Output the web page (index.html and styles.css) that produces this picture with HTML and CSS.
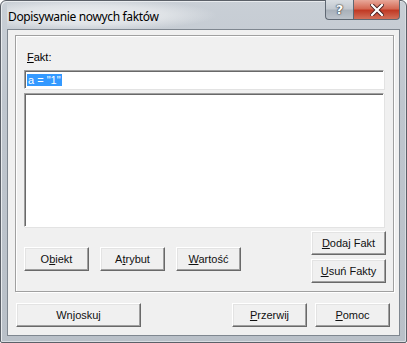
FILE: index.html
```html
<!DOCTYPE html>
<html lang="pl">
<head>
    <meta charset="UTF-8">
    <title>Dopisywanie nowych faktów</title>
    <link rel="stylesheet" href="styles.css">
</head>
<body>
    <div class="window">
        <!-- Pasek tytułu -->
        <div class="titlebar">
            <span class="title">Dopisywanie nowych faktów</span>
            <div class="caption-buttons">
                <div class="cap-btn help">?</div>
                <div class="cap-btn close">
                    <svg width="14" height="12" viewBox="0 0 14 12">
                        <path d="M2 1 L12 11 M12 1 L2 11" stroke="#4a2020" stroke-width="4" stroke-linecap="square"/>
                        <path d="M2 1 L12 11 M12 1 L2 11" stroke="#ffffff" stroke-width="2.2" stroke-linecap="square"/>
                    </svg>
                </div>
            </div>
        </div>

        <div class="client">
            <div class="panel">
                <label class="label"><u>F</u>akt:</label>
                <div class="fact-input"><span class="selected">a = "1"</span></div>
                <div class="fact-list"></div>

                <div class="panel-row">
                    <div class="btn-group">
                        <button class="btn btn-small">O<u>b</u>iekt</button>
                        <button class="btn btn-small">A<u>t</u>rybut</button>
                        <button class="btn btn-small"><u>W</u>artość</button>
                    </div>
                    <div class="btn-column">
                        <button class="btn btn-side"><u>D</u>odaj Fakt</button>
                        <button class="btn btn-side"><u>U</u>suń Fakty</button>
                    </div>
                </div>
            </div>

            <div class="bottom-row">
                <button class="btn btn-wide">Wnjoskuj</button>
                <div class="btn-pair">
                    <button class="btn btn-side"><u>P</u>rzerwij</button>
                    <button class="btn btn-side"><u>P</u>omoc</button>
                </div>
            </div>
        </div>
    </div>
</body>
</html>
```

FILE: styles.css
```css
body {
    margin: 0;
    background: #ffffff;
    font-family: "Liberation Sans", Arial, sans-serif;
}

/* ramka okna */
.window {
    position: relative;
    width: 407px;
    height: 343px;
    box-sizing: border-box;
    border: 1px solid #5b6068;
    border-radius: 6px 6px 2px 2px;
    padding: 0 6px 6px 6px;
    display: flex;
    flex-direction: column;
    background: linear-gradient(to bottom, #c9cfd6 0%, #bfc6ce 30%, #b9c0c8 100%);
    box-shadow: inset 1px 1px 0 #e8ebee, inset -1px -1px 0 #d9dde2;
}

.titlebar {
    height: 28px;
    display: flex;
    align-items: center;
    background: radial-gradient(ellipse 130px 16px at 80px 14px, #eef0f2 0%, rgba(238,240,242,0.6) 60%, rgba(238,240,242,0) 100%);
}

.title {
    font-family: "Noto Sans", "Open Sans", sans-serif;
    font-size: 12px;
    letter-spacing: -0.35px;
    color: #000;
    margin-left: 1px;
    margin-top: 2px;
}

.caption-buttons {
    position: absolute;
    top: -1px;
    right: 6px;
    display: flex;
}

.cap-btn {
    height: 20px;
    box-sizing: border-box;
    display: flex;
    align-items: center;
    justify-content: center;
    border: 1px solid #5f6873;
    border-top: none;
}

.help {
    width: 28px;
    border-radius: 0 0 0 4px;
    border-right: none;
    background: linear-gradient(to bottom, #d8dde2 0%, #c3c9d0 45%, #a9b1ba 55%, #bcc3cb 100%);
    color: #fff;
    font-family: "DejaVu Sans", sans-serif;
    font-weight: bold;
    font-size: 13px;
    text-shadow: 0 0 1px #3a4048, 0 0 1px #3a4048, 0 0 2px #3a4048;
}

.close {
    width: 47px;
    border-radius: 0 0 4px 0;
    background: linear-gradient(to bottom, #e8a89a 0%, #d56a55 45%, #c13a25 55%, #d2705a 100%);
}

/* obszar klienta */
.client {
    flex: 1;
    background: #f0f0f0;
    border: 1px solid #7f8790;
    display: flex;
    flex-direction: column;
    padding: 5px 5px 0 7px;
}

.panel {
    height: 257px;
    box-sizing: border-box;
    border: 1px solid #a0a0a0;
    box-shadow: 1px 1px 0 #ffffff, inset 1px 1px 0 #ffffff;
    padding: 15px 9px 7px 8px;
    display: flex;
    flex-direction: column;
}

.label {
    font-size: 11px;
    line-height: 13px;
    margin-left: 3px;
    color: #000;
}

.fact-input {
    margin-top: 6px;
    height: 19px;
    box-sizing: border-box;
    background: #fff;
    border-top: 1px solid #a0a0a0;
    border-left: 1px solid #a0a0a0;
    border-right: 1px solid #ffffff;
    border-bottom: 1px solid #ffffff;
    box-shadow: inset 1px 1px 0 #696969, 1px 1px 0 #e3e3e3;
    padding: 2px 0 0 2px;
    font-size: 11px;
    line-height: 14px;
}

.selected {
    background: #3399ff;
    color: #fff;
    padding: 0 1px;
}

.fact-list {
    margin-top: 4px;
    height: 134px;
    box-sizing: border-box;
    background: #fff;
    border-top: 1px solid #a0a0a0;
    border-left: 1px solid #a0a0a0;
    border-right: 1px solid #ffffff;
    border-bottom: 1px solid #ffffff;
    box-shadow: inset 1px 1px 0 #696969, 1px 1px 0 #e3e3e3;
}

.panel-row {
    margin-top: 4px;
    display: flex;
    justify-content: space-between;
    align-items: center;
    margin-right: -2px;
}

.btn-group {
    display: flex;
    gap: 11px;
    margin-top: 4px;
}

.btn-column {
    display: flex;
    flex-direction: column;
    gap: 4px;
}

.btn {
    height: 24px;
    box-sizing: border-box;
    background: #f0f0f0;
    border-top: 1px solid #ffffff;
    border-left: 1px solid #ffffff;
    border-right: 1px solid #696969;
    border-bottom: 1px solid #696969;
    box-shadow: inset -1px -1px 0 #a0a0a0, inset 1px 1px 0 #e3e3e3;
    font-family: "Liberation Sans", Arial, sans-serif;
    font-size: 11px;
    font-weight: normal;
    color: #111;
    padding: 0;
}

.btn-small {
    width: 65px;
}

.btn-side {
    width: 75px;
}

.btn-wide {
    width: 125px;
}

.bottom-row {
    margin-top: 11px;
    display: flex;
    justify-content: space-between;
    margin-left: 1px;
    margin-right: 4px;
}

.btn-pair {
    display: flex;
    gap: 8px;
}
```
